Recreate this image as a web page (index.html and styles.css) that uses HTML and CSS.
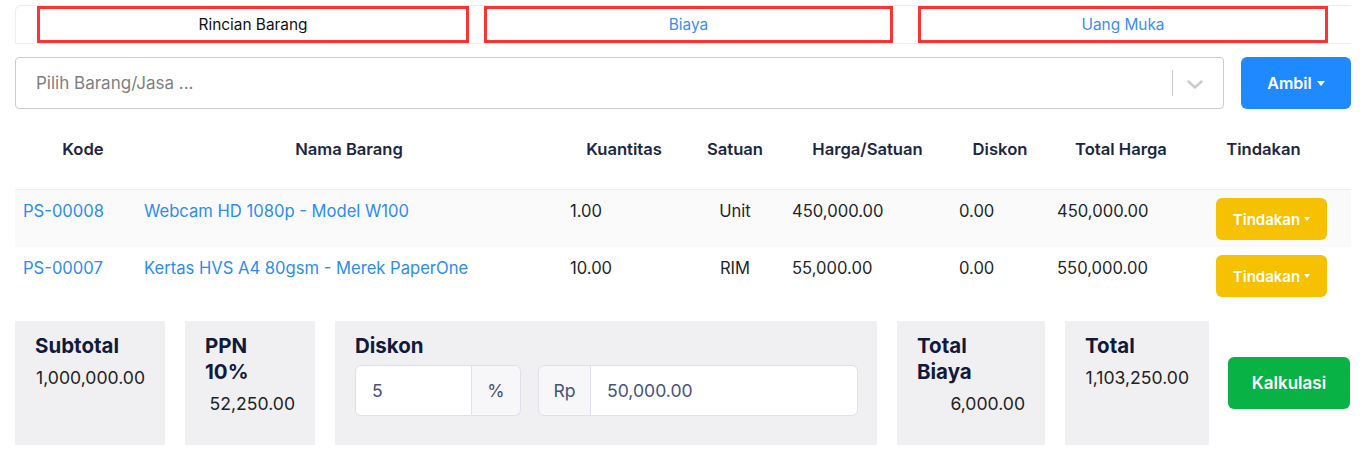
FILE: index.html
```html
<!DOCTYPE html>
<html lang="id">
<head>
<meta charset="utf-8">
<title>Rincian Barang</title>
<link rel="stylesheet" href="styles.css">
</head>
<body>
<div class="page">
  <div class="tabs">
    <div class="tab tab-1 active">Rincian Barang</div>
    <div class="tab tab-2">Biaya</div>
    <div class="tab tab-3">Uang Muka</div>
  </div>

  <div class="picker">
    <div class="select">
      <span class="placeholder">Pilih Barang/Jasa ...</span>
      <span class="sep"></span>
      <span class="chev"><svg width="16" height="9" viewBox="0 0 16 9"><path d="M1.5 1.5 L8 7.5 L14.5 1.5" fill="none" stroke="#cccccc" stroke-width="2.4" stroke-linecap="round" stroke-linejoin="round"/></svg></span>
    </div>
    <button class="btn btn-blue">Ambil<span class="caret caret-lg"></span></button>
  </div>

  <div class="table">
    <div class="row head">
      <div class="cell c1">Kode</div>
      <div class="cell c2">Nama Barang</div>
      <div class="cell c3">Kuantitas</div>
      <div class="cell c4">Satuan</div>
      <div class="cell c5">Harga/Satuan</div>
      <div class="cell c6">Diskon</div>
      <div class="cell c7">Total Harga</div>
      <div class="cell c8">Tindakan</div>
    </div>
    <div class="row body odd">
      <div class="cell c1 link">PS-00008</div>
      <div class="cell c2 link">Webcam HD 1080p - Model W100</div>
      <div class="cell c3">1.00</div>
      <div class="cell c4">Unit</div>
      <div class="cell c5">450,000.00</div>
      <div class="cell c6">0.00</div>
      <div class="cell c7">450,000.00</div>
      <div class="cell c8"><button class="btn btn-yellow">Tindakan<span class="caret caret-sm"></span></button></div>
    </div>
    <div class="row body">
      <div class="cell c1 link">PS-00007</div>
      <div class="cell c2 link">Kertas HVS A4 80gsm - Merek PaperOne</div>
      <div class="cell c3">10.00</div>
      <div class="cell c4">RIM</div>
      <div class="cell c5">55,000.00</div>
      <div class="cell c6">0.00</div>
      <div class="cell c7">550,000.00</div>
      <div class="cell c8"><button class="btn btn-yellow">Tindakan<span class="caret caret-sm"></span></button></div>
    </div>
  </div>

  <div class="summary">
    <div class="box box-subtotal">
      <div class="box-title">Subtotal</div>
      <div class="box-value">1,000,000.00</div>
    </div>
    <div class="box box-ppn">
      <div class="box-title">PPN<br>10%</div>
      <div class="box-value">52,250.00</div>
    </div>
    <div class="box box-diskon">
      <div class="box-title">Diskon</div>
      <div class="inputs">
        <div class="igroup">
          <div class="field field-pct">5</div>
          <div class="addon addon-right">%</div>
        </div>
        <div class="igroup">
          <div class="addon addon-left">Rp</div>
          <div class="field field-rp">50,000.00</div>
        </div>
      </div>
    </div>
    <div class="box box-biaya">
      <div class="box-title">Total<br>Biaya</div>
      <div class="box-value">6,000.00</div>
    </div>
    <div class="box box-total">
      <div class="box-title">Total</div>
      <div class="box-value">1,103,250.00</div>
    </div>
    <button class="btn btn-green">Kalkulasi</button>
  </div>
</div>
</body>
</html>
```

FILE: styles.css
```css
* { box-sizing: border-box; }

html, body {
  margin: 0;
  padding: 0;
  background: #ffffff;
}

body {
  font-family: Inter, "Noto Sans", "Liberation Sans", sans-serif;
  font-size: 16px;
  line-height: 24px;
  color: #212529;
}

.page {
  padding: 0 21px 0 15px;
}

/* Tabs */
.tabs {
  margin-top: 5px;
  display: flex;
  border-top: 1px solid #ececec;
  border-left: 1px solid #ececec;
  border-bottom: 1px solid #eeeeee;
  border-top-left-radius: 6px;
  padding-left: 21px;
}

.tab {
  height: 37px;
  border: 3px solid #ff3333;
  display: flex;
  align-items: center;
  justify-content: center;
  font-size: 15.4px;
  color: #3a8df2;
  background: #ffffff;
}

.tab.active { color: #111111; }
.tab-1 { width: 432px; }
.tab-2 { width: 409px; margin-left: 15px; }
.tab-3 { width: 410px; margin-left: 25px; }

/* Picker */
.picker {
  margin-top: 13px;
  display: flex;
  gap: 17px;
}

.select {
  flex: 1;
  height: 52px;
  border: 1px solid #cccccc;
  border-radius: 4px;
  display: flex;
  align-items: center;
  padding-left: 20px;
}

.placeholder {
  flex: 1;
  color: #808080;
  font-size: 17px;
}

.sep {
  width: 1px;
  height: 26px;
  background: #cccccc;
}

.chev {
  display: flex;
  margin: 2px 20px 0 14px;
}

.btn {
  font-family: Inter, "Noto Sans", "Liberation Sans", sans-serif;
  border: none;
  color: #ffffff;
  font-weight: 600;
  display: inline-flex;
  align-items: center;
  justify-content: center;
  border-radius: 6px;
  padding: 0;
  cursor: pointer;
}

.btn-blue {
  width: 110px;
  height: 52px;
  background: #1f8aff;
  font-size: 16px;
}

.caret {
  display: inline-block;
  width: 0;
  height: 0;
  border-left-style: solid;
  border-right-style: solid;
  border-top-style: solid;
  border-left-color: transparent;
  border-right-color: transparent;
  border-top-color: #ffffff;
}

.caret-lg {
  margin-left: 5px;
  border-width: 5px 4.5px 0 4.5px;
}

.caret-sm {
  margin-left: 4px;
  border-width: 4px 3px 0 3px;
}

/* Table */
.table {
  margin-top: 16px;
  font-size: 16.6px;
}

.row {
  display: grid;
  grid-template-columns: 121px 426px 124px 98px 167px 98px 144px 157px;
}

.cell {
  padding: 9px 8px 7px;
  white-space: nowrap;
}

.head .cell {
  padding: 12px 8px 28px;
  font-weight: 600;
  color: #1d2642;
  text-align: center;
}

.head .c1 { padding-left: 23px; }
.head .c8 { padding-right: 24px; }

.body {
  height: 58px;
}

.body.odd {
  background: #fafafa;
  border-top: 1px solid #eeeeee;
}

.body .c4 { text-align: center; }
.body .c8 { display: flex; justify-content: center; padding-top: 8px; }

.link { color: #2d8cf0; }

.btn-yellow {
  width: 111px;
  height: 42px;
  background: #f6c100;
  font-size: 15px;
}

/* Summary */
.summary {
  margin-top: 16px;
  display: flex;
  gap: 20px;
  align-items: stretch;
  font-size: 17.6px;
}

.box {
  background: #f0f0f3;
  height: 124px;
  padding: 12px 20px 10px;
}

.box-subtotal { width: 150px; }
.box-ppn { width: 130px; }
.box-diskon { width: 542px; }
.box-biaya { width: 148px; }
.box-total { width: 144px; }

.box-title {
  font-size: 20.5px;
  line-height: 26px;
  font-weight: 700;
  color: #121a3a;
}

.box-value {
  margin-top: 7px;
  text-align: right;
  color: #222222;
  white-space: nowrap;
}

.inputs {
  margin-top: 6px;
  display: flex;
  gap: 17px;
}

.igroup {
  display: flex;
  height: 51px;
}

.field, .addon {
  display: flex;
  align-items: center;
  border: 1px solid #dfe1ea;
  color: #46527a;
}

.field {
  background: #ffffff;
  padding-left: 16px;
}

.addon {
  background: #f7f7f9;
  justify-content: center;
}

.field-pct {
  width: 117px;
  border-radius: 6px 0 0 6px;
}

.addon-right {
  width: 49px;
  border-left: none;
  border-radius: 0 6px 6px 0;
}

.addon-left {
  width: 53px;
  border-radius: 6px 0 0 6px;
}

.field-rp {
  width: 267px;
  border-left: none;
  border-radius: 0 6px 6px 0;
}

.btn-green {
  align-self: center;
  width: 122px;
  height: 52px;
  margin-left: -1px;
  background: #09b245;
  font-size: 17px;
}
```
